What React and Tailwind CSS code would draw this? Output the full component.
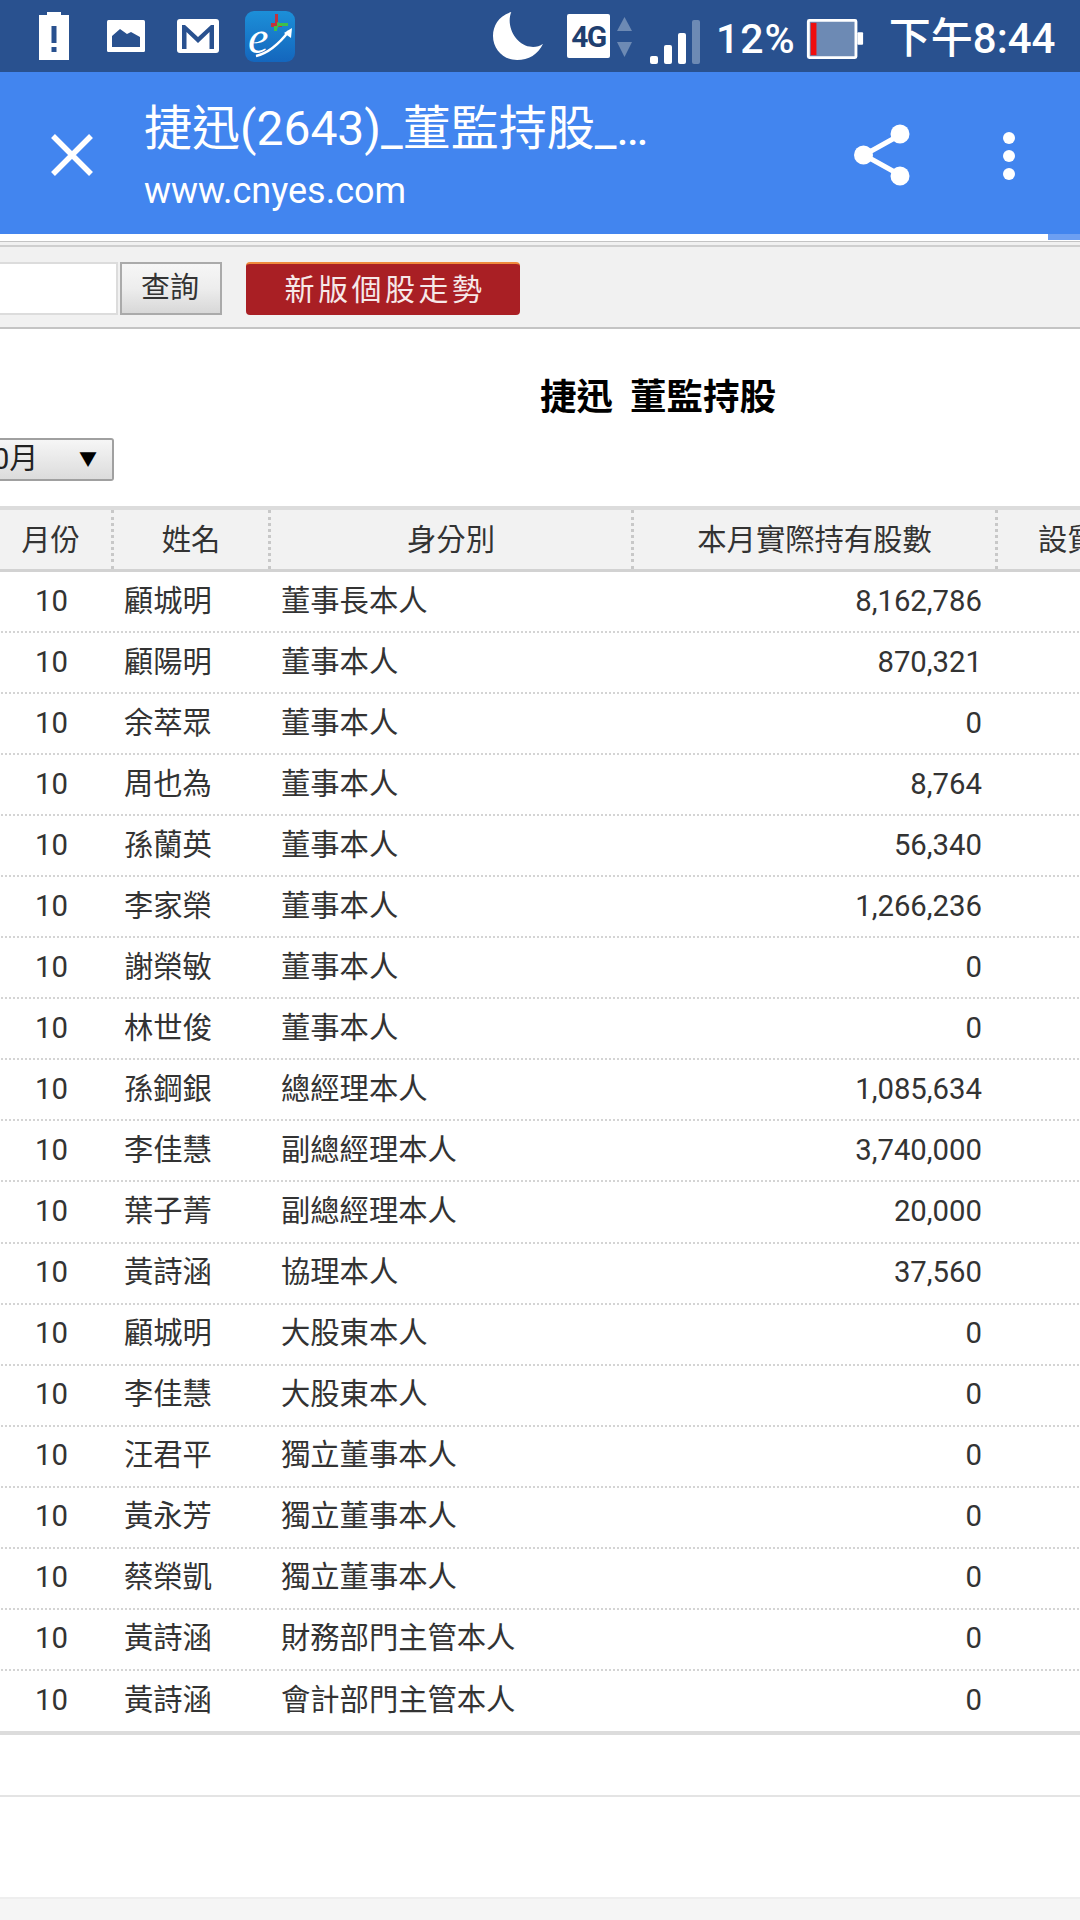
const rows = [
  ["顧城明","董事長本人","8,162,786"],["顧陽明","董事本人","870,321"],["余萃眾","董事本人","0"],["周也為","董事本人","8,764"],
  ["孫蘭英","董事本人","56,340"],["李家榮","董事本人","1,266,236"],["謝榮敏","董事本人","0"],["林世俊","董事本人","0"],
  ["孫鋼銀","總經理本人","1,085,634"],["李佳慧","副總經理本人","3,740,000"],["葉子菁","副總經理本人","20,000"],["黃詩涵","協理本人","37,560"],
  ["顧城明","大股東本人","0"],["李佳慧","大股東本人","0"],["汪君平","獨立董事本人","0"],["黃永芳","獨立董事本人","0"],
  ["蔡榮凱","獨立董事本人","0"],["黃詩涵","財務部門主管本人","0"],["黃詩涵","會計部門主管本人","0"],
];

function StatusBar() {
  return (
    <div className="h-[72px] bg-[#29518f] flex items-center text-white shrink-0">
      <svg className="ml-[39px]" width="30" height="48" viewBox="0 0 30 48">
        <path d="M8 0h14v3h8v45H0V3h8z" fill="#fff" />
        <rect x="12.5" y="14" width="5" height="17" fill="#29518f" />
        <rect x="12.5" y="35" width="5" height="5" fill="#29518f" />
      </svg>
      <svg className="ml-[38px]" width="38" height="32" viewBox="0 0 38 32">
        <rect width="38" height="32" rx="1.5" fill="#fff" />
        <path d="M5 27V16l8-7 7 5 4-2 9 5v10z" fill="#29518f" />
      </svg>
      <svg className="ml-[32px]" width="42" height="34" viewBox="0 0 42 34">
        <rect width="42" height="34" rx="3" fill="#fff" />
        <path d="M5 30V6h3l13 12L34 6h3v24h-4.500V13L21 24 9.500 13v17z" fill="#29518f" />
      </svg>
      <svg className="ml-[26px]" width="50" height="51" viewBox="0 0 50 51">
        <defs>
          <linearGradient id="ag" x1="0" y1="0" x2="0" y2="1">
            <stop offset="0" stopColor="#1c8fd8" />
            <stop offset="1" stopColor="#1466bd" />
          </linearGradient>
        </defs>
        <rect width="50" height="51" rx="9" fill="url(#ag)" />
        <text x="3" y="42" fontFamily="'Liberation Serif',serif" fontStyle="italic" fontSize="46" fill="#fff">e</text>
        <path d="M11 45C24 42 34 33 44 20" stroke="#fff" strokeWidth="2.500" fill="none" />
        <path d="M47 17l-1 10-7-5z" fill="#fff" />
        <path d="M30 3h3v9h4v4H26v-4h4z" fill="#c0323f" />
        <path d="M32 20c0-3 1-5 3-5h8v-3h-8l-3-1v4h-3v5z" fill="#3fbf4a" />
      </svg>
      <svg className="ml-[198px]" width="50" height="50" viewBox="0 0 52 50">
        <path d="M19 0C6 4 0 14 0 25c0 14 11 25 25 25 12 0 22-6 27-17-4 3-9 4-14 3C24 34 13 15 19 0z" fill="#fff" />
      </svg>
      <div className="ml-[24px] w-[43px] h-[44px] bg-white rounded-[2px] flex items-center justify-center text-[#1f3f70] text-[30px] font-bold tracking-[-1.5px]">4G</div>
      <svg className="ml-[7px] mt-[2px]" width="15" height="40" viewBox="0 0 15 40">
        <path d="M7.500 0L15 14H0z" fill="#6d8ab4" />
        <path d="M7.500 40L15 25H0z" fill="#6d8ab4" />
      </svg>
      <svg className="ml-[18px] mt-[12px]" width="50" height="44" viewBox="0 0 50 44">
        <rect x="0" y="36" width="8" height="8" rx="2" fill="#fff" />
        <rect x="14" y="25" width="8" height="19" rx="2" fill="#fff" />
        <rect x="28" y="13" width="8" height="31" rx="2" fill="#fff" />
        <rect x="42" y="0" width="8" height="44" rx="2" fill="#6d8ab4" />
      </svg>
      <span className="ml-[16px] mt-[6px] text-[41px] font-medium leading-none tracking-[1px]">12%</span>
      <svg className="ml-[10px] mt-[5px]" width="58" height="40" viewBox="0 0 59 42">
        <rect x="1.500" y="1.500" width="50" height="39" rx="1" fill="#6d8ab4" stroke="#fff" strokeWidth="3" />
        <rect x="4" y="4" width="6" height="34" fill="#f00d0d" />
        <rect x="53" y="14" width="6" height="13" rx="1" fill="#fff" />
      </svg>
      <span className="ml-[25px] mt-[6px] text-[42px] font-medium leading-none whitespace-nowrap">下午8:44</span>
    </div>
  );
}

function Toolbar() {
  return (
    <div className="h-[162px] bg-[#4285ef] flex items-start text-white shrink-0">
      <svg className="ml-[51px] mt-[62px] shrink-0" width="42" height="42" viewBox="0 0 42 42">
        <path d="M2 2l38 38M40 2L2 40" stroke="#fff" strokeWidth="5.500" fill="none" />
      </svg>
      <div className="ml-[51px] w-[600px] mt-[29px]">
        <div className="text-[48px] leading-[56px] whitespace-nowrap">捷迅(2643)_董監持股_…</div>
        <div className="text-[36px] leading-[42px] mt-[13px]">www.cnyes.com</div>
      </div>
      <svg className="ml-[110px] mt-[52px] shrink-0" width="56" height="62" viewBox="0 0 56 62">
        <path d="M46 11L10 31l36 20" stroke="#fff" strokeWidth="5" fill="none" />
        <circle cx="46" cy="10" r="9.500" fill="#fff" />
        <circle cx="9.500" cy="31" r="9.500" fill="#fff" />
        <circle cx="46" cy="52" r="9.500" fill="#fff" />
      </svg>
      <div className="ml-[93px] mt-[60px] flex flex-col gap-[6px] shrink-0">
        <div className="w-[12px] h-[12px] rounded-full bg-white" />
        <div className="w-[12px] h-[12px] rounded-full bg-white" />
        <div className="w-[12px] h-[12px] rounded-full bg-white" />
      </div>
    </div>
  );
}

function Progress() {
  return (
    <div className="h-[6px] flex shrink-0">
      <div className="w-[1048px] bg-white" />
      <div className="flex-1 bg-[#6d9ff2]" />
    </div>
  );
}

function SearchBar() {
  return (
    <div className="shrink-0 h-[88px] border-t-[1px] border-b-[2px] border-[#c4c4c4] bg-[#f1f1f1] flex items-start pt-[20px] mt-[1px] relative">
      <div className="absolute left-0 right-0 top-[3px] h-[2px] bg-[#cfcfcf]" />
      <div className="w-[118px] h-[53px] bg-white border-y-[2px] border-r-[2px] border-[#dcdcdc]" />
      <div className="ml-[2px] w-[102px] h-[53px] border-[2px] border-[#aaaaaa] bg-gradient-to-b from-[#f6f6f6] via-[#ededed] to-[#d8d8d8] flex items-center justify-center pr-[2px] text-[29px] text-[#333]">查詢</div>
      <div className="ml-[24px] w-[274px] h-[53px] rounded-[4px] bg-[#a91f24] border-t-[2px] border-[#f08a3c] flex items-center justify-center pl-[4px] text-[30px] tracking-[3.500px] text-[#f6e8e8]">新版個股走勢</div>
    </div>
  );
}

const cols = "grid grid-cols-[121px_157px_363px_364px_200px]";

function Table() {
  return (
    <div className="w-[1205px] ml-[-10px] text-[29.3px] text-[#333]">
      <div className={`${cols} h-[66px] bg-[#f2f2f2] border-t-[4px] border-b-[3px] border-t-[#dcdcdc] border-b-[#d2d2d2]`}>
        <div className="flex items-center justify-center pt-[2px]">月份</div>
        <div className="flex items-center justify-center pt-[2px] border-l-[3px] border-dotted border-[#c8c8c8]">姓名</div>
        <div className="flex items-center justify-center pt-[2px] border-l-[3px] border-dotted border-[#c8c8c8]">身分別</div>
        <div className="flex items-center justify-center pt-[2px] border-l-[3px] border-dotted border-[#c8c8c8]">本月實際持有股數</div>
        <div className="flex items-center pt-[2px] pl-[40px] border-l-[3px] border-dotted border-[#c8c8c8] whitespace-nowrap">設質股數</div>
      </div>
      {rows.map((r, i) => (
        <div key={i} className={`${cols} items-center ${i < rows.length - 1 ? "h-[61.05px] border-b-[2px] border-dotted border-[#d4d4d4]" : "h-[60px]"}`}>
          <div className="text-center pl-[2px]">10</div>
          <div className="pl-[13px]">{r[0]}</div>
          <div className="pl-[13px]">{r[1]}</div>
          <div className="text-right pr-[13px]">{r[2]}</div>
          <div />
        </div>
      ))}
      <div className="h-[4px] bg-[#dcdcdc]" />
    </div>
  );
}

export default function App() {
  return (
    <div className="w-[1080px] h-[1920px] overflow-hidden bg-white flex flex-col font-[Roboto,'Noto_Sans_CJK_TC',sans-serif]">
      <StatusBar />
      <Toolbar />
      <Progress />
      <SearchBar />
      <div className="h-[109px] shrink-0 pt-[44px] pl-[540px] text-[36.5px] leading-[50px] font-bold text-black whitespace-pre">捷迅<span className="inline-block w-[17px]" />董監持股</div>
      <div className="shrink-0 w-[114px] h-[43px] border-[2px] border-l-0 border-[#a0a0a0] rounded-r-[3px] bg-gradient-to-b from-[#f6f6f6] to-[#dcdcdc] flex items-center justify-between pr-[15px] text-[29px] text-[#222] overflow-hidden">
        <span className="ml-[-7px]">0月</span>
        <span className="text-[18px] text-black">▼</span>
      </div>
      <div className="h-[25px] shrink-0" />
      <Table />
      <div className="h-[60px] shrink-0" />
      <div className="h-[2px] bg-[#e4e4e4] shrink-0" />
      <div className="h-[100px] shrink-0" />
      <div className="flex-1 bg-[#f5f5f5] border-t-[2px] border-[#eeeeee]" />
    </div>
  );
}
